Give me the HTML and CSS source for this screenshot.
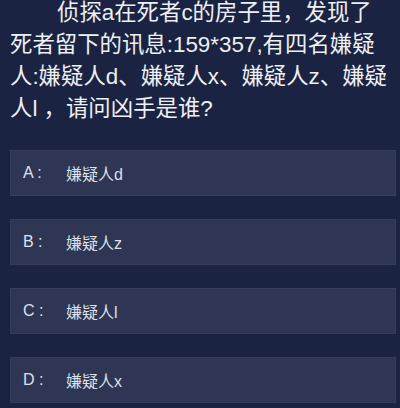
FILE: index.html
```html
<!DOCTYPE html>
<html lang="zh">
<head>
<meta charset="utf-8">
<link rel="stylesheet" href="styles.css">
</head>
<body>
<div class="page">
  <p class="question">侦探a在死者c的房子里，发现了<br>死者留下的讯息:159*357,有四名嫌疑<br>人:嫌疑人d、嫌疑人x、嫌疑人z、嫌疑<br>人l ，请问凶手是谁?</p>
  <div class="options">
    <div class="option"><span class="label">A :</span><span class="text">嫌疑人d</span></div>
    <div class="option"><span class="label">B :</span><span class="text">嫌疑人z</span></div>
    <div class="option"><span class="label">C :</span><span class="text">嫌疑人l</span></div>
    <div class="option"><span class="label">D :</span><span class="text">嫌疑人x</span></div>
  </div>
</div>
</body>
</html>
```
FILE: styles.css
```css
html, body {
  margin: 0;
  padding: 0;
  background: #1b2342;
}
.page {
  width: 400px;
  height: 408px;
  overflow: hidden;
  font-family: "Liberation Sans", "Noto Sans CJK SC", sans-serif;
}
.question {
  margin: -3px 0 0 0;
  padding: 0 0 0 10px;
  font-size: 22.4px;
  line-height: 32px;
  text-indent: 47px;
  color: #eef0f5;
  white-space: nowrap;
}
.options {
  display: flex;
  flex-direction: column;
  gap: 23px;
  margin: 25px 4px 0 10px;
}
.option {
  display: flex;
  align-items: center;
  height: 46px;
  box-sizing: border-box;
  padding-left: 12px;
  background: #2e3654;
  border: 1px solid #343d5b;
  color: #dde0ea;
  font-size: 16px;
}
.label {
  width: 43px;
  flex: none;
}
```
